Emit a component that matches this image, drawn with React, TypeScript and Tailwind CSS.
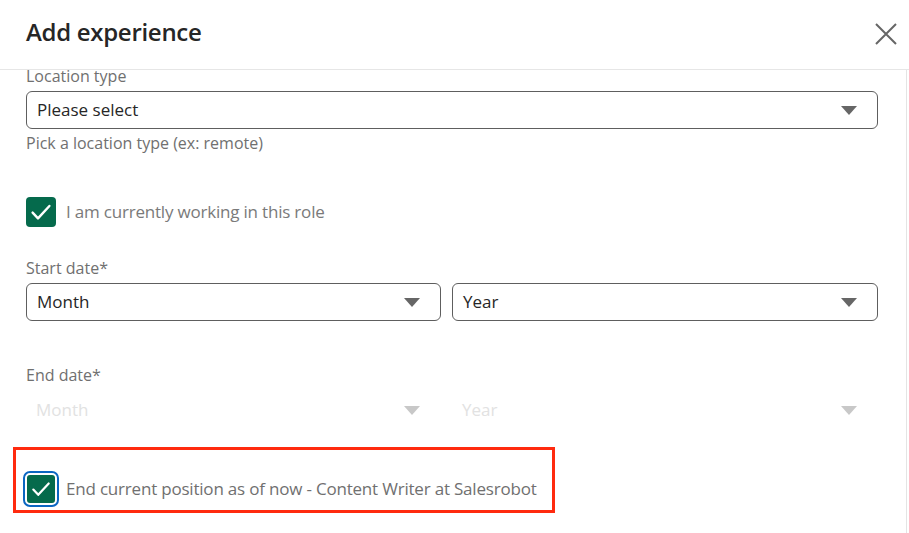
import React from "react";

const font = { fontFamily: '"Open Sans", "Noto Sans", sans-serif' };

function Caret({ light }: { light?: boolean }) {
  return (
    <svg width="16" height="9" viewBox="0 0 16 9" className="shrink-0">
      <path d="M0 0h16L8 9z" fill={light ? "#c8c8c8" : "#666666"} />
    </svg>
  );
}

function Check({ size = 22 }: { size?: number }) {
  return (
    <svg width={size} height={size} viewBox="0 0 20 20" fill="none">
      <path d="M3 10.5l4.5 4.8L17 5" stroke="white" strokeWidth="2" strokeLinecap="round" strokeLinejoin="round" />
    </svg>
  );
}

function SelectBox({ value, disabled, narrow }: { value: string; disabled?: boolean; narrow?: boolean }) {
  const size = narrow ? "w-[415px] shrink-0" : "flex-1";
  return (
    <div
      className={
        disabled
          ? `flex h-[38px] items-center justify-between pl-[10px] pr-[21px] ${size}`
          : `flex h-[38px] items-center justify-between rounded-[6px] border border-[#5e5e5e] pl-[10px] pr-[20px] ${size}`
      }
    >
      <span className={disabled ? "text-[17px] text-[#e2e2e2]" : "text-[17px] text-[#262626]"}>{value}</span>
      <Caret light={disabled} />
    </div>
  );
}

export default function App() {
  return (
    <div className="h-[533px] w-[909px] overflow-hidden bg-white" style={font}>
      <div className="flex h-[70px] items-center justify-between border-b border-[#e6e6e6] pb-[5px] pl-[26px] pr-[12px]">
        <h2 className="text-[24px] font-semibold tracking-[-0.3px] text-[#262626]">Add experience</h2>
        <svg width="22" height="22" viewBox="0 0 22 22" className="mt-[3px]">
          <path d="M1 1l20 20M21 1L1 21" stroke="#666666" strokeWidth="2" />
        </svg>
      </div>
      <div className="flex h-[463px]">
        <div className="flex-1 overflow-hidden pl-[26px] pr-[28px]">
          <div className="-mt-[6px] text-[16px] leading-[24px] text-[#707070]">Location type</div>
          <div className="mt-[3px] flex">
            <SelectBox value="Please select" />
          </div>
          <div className="mt-[2px] text-[16px] leading-[24px] text-[#707070]">Pick a location type (ex: remote)</div>

          <label className="mt-[42px] flex items-center gap-[10px]">
            <span className="flex h-[30px] w-[30px] items-center justify-center rounded-[4px] bg-[#056a4c]">
              <Check size={24} />
            </span>
            <span className="text-[17px] tracking-[-0.2px] text-[#7a7a7a]">I am currently working in this role</span>
          </label>

          <div className="mt-[29px] text-[16px] leading-[24px] text-[#707070]">Start date*</div>
          <div className="mt-[3px] flex gap-[11px]">
            <SelectBox value="Month" narrow />
            <SelectBox value="Year" />
          </div>

          <div className="mt-[42px] text-[16px] leading-[24px] text-[#707070]">End date*</div>
          <div className="mt-[4px] flex gap-[11px]">
            <SelectBox value="Month" disabled narrow />
            <SelectBox value="Year" disabled />
          </div>

          <div className="-ml-[13px] mt-[18px] flex h-[66px] w-[542px] items-center border-[3px] border-[#ff2a0f] pl-[7px] pt-[18px]">
            <label className="flex items-center gap-[7px]">
              <span className="flex h-[36px] w-[36px] items-center justify-center rounded-[7px] border-[2px] border-[#0a66c2] p-[2px]">
                <span className="flex h-full w-full items-center justify-center rounded-[3px] bg-[#056a4c]">
                  <Check size={22} />
                </span>
              </span>
              <span className="text-[17px] tracking-[-0.2px] text-[#707070]">
                End current position as of now - Content Writer at Salesrobot
              </span>
            </label>
          </div>
        </div>
        <div className="w-[3px] border-l border-[#e4e4e4]" />
      </div>
    </div>
  );
}
